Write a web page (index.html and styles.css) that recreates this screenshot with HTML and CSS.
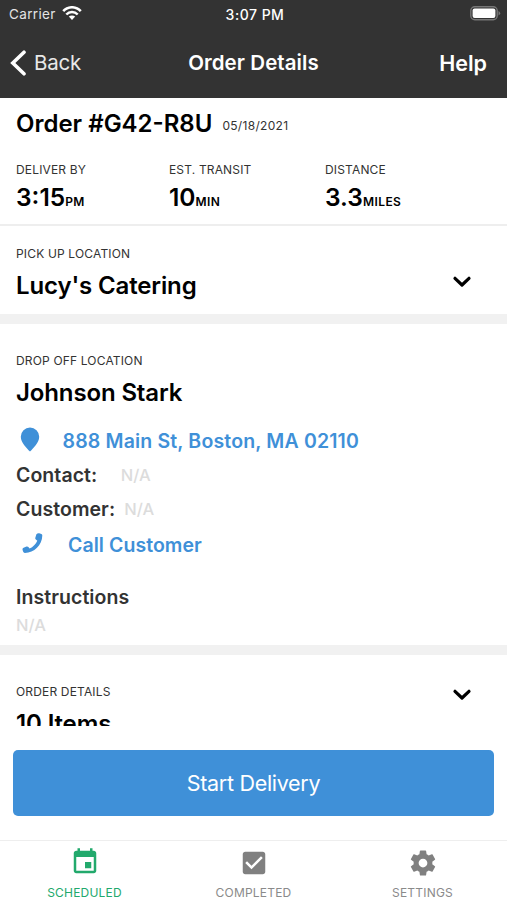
FILE: index.html
```html
<!DOCTYPE html>
<html lang="en">
<head>
<meta charset="utf-8">
<title>Order Details</title>
<link rel="stylesheet" href="styles.css">
</head>
<body>
<div class="app">
  <header class="header">
    <div class="status">
      <div class="carrier"><span>Carrier</span>
        <svg class="wifi" width="20" height="15" viewBox="0 0 20 15" fill="none" stroke="#fff" stroke-width="2.5"><path d="M1.2 5.2C6-.1 14-.1 18.8 5.2"/><path d="M4.3 8.5C7.6 5 12.4 5 15.7 8.5"/><path d="M10 14 6.8 10.6C8.5 9.1 11.5 9.1 13.2 10.6Z" fill="#fff" stroke="none"/></svg>
      </div>
      <span class="clock">3:07 PM</span>
      <svg class="battery" width="31" height="15" viewBox="0 0 31 15"><rect x=".8" y=".8" width="26.4" height="13" rx="4" fill="none" stroke="#777" stroke-width="1.4"/><rect x="2.6" y="2.6" width="22.8" height="9.4" rx="2" fill="#fff"/><path d="M28.5 5v4.6q1.7-.8 1.7-2.3T28.5 5Z" fill="#777"/></svg>
    </div>
    <nav class="nav">
      <div class="back"><svg width="16" height="26" viewBox="0 0 16 26" fill="none" stroke="#fff" stroke-width="3.6" stroke-linecap="round"><path d="M14 2.2 2.8 13 14 23.8"/></svg><span>Back</span></div>
      <h1 class="title">Order Details</h1>
      <span class="help">Help</span>
    </nav>
  </header>
  <main class="content">
    <section class="summary">
      <div class="heading"><h2 class="order">Order #G42-R8U</h2><span class="date">05/18/2021</span></div>
      <div class="stats">
        <div><div class="label">DELIVER BY</div><div class="value">3:15<small>PM</small></div></div>
        <div><div class="label">EST. TRANSIT</div><div class="value">10<small>MIN</small></div></div>
        <div><div class="label">DISTANCE</div><div class="value">3.3<small>MILES</small></div></div>
      </div>
    </section>
    <section class="pickup">
      <div><div class="label">PICK UP LOCATION</div><h2 class="name">Lucy's Catering</h2></div>
      <svg class="chevron" width="20" height="14" viewBox="0 0 20 14"><path d="M3 3.3 10 10 17 3.3"/></svg>
    </section>
    <section class="dropoff">
      <div class="label">DROP OFF LOCATION</div>
      <h2 class="name">Johnson Stark</h2>
      <div class="address"><svg width="20" height="25" viewBox="0 0 20 25"><path d="M10 .5A9.2 9.2 0 0 0 .8 9.7C.8 15.4 6.5 21 10 24.5 13.5 21 19.2 15.4 19.2 9.7A9.2 9.2 0 0 0 10 .5Z" fill="#3f90d8"/></svg><span>888 Main St, Boston, MA 02110</span></div>
      <div class="field contact"><span>Contact:</span><span class="na">N/A</span></div>
      <div class="field customer"><span>Customer:</span><span class="na">N/A</span></div>
      <div class="call"><svg width="21" height="21" viewBox="0 0 21 21"><path d="M14.4 1.3Q15.6-.1 17.3.3L19.3.9Q20.300 1.200 20.300 2.400C20.200 11.800 12 19.800 3 19.900Q1.600 20 1.200 18.800L.6 16.900Q.2 15.400 1.600 14.800L4.500 13.600Q5.600 13.200 6.400 14.100L7.600 15.500C11 13.900 13.800 11.200 15.300 7.700L13.900 6.500Q12.900 5.700 13.400 4.500Z" fill="#3f90d8"/></svg><span>Call Customer</span></div>
      <div class="field instructions">Instructions</div>
      <div class="na note">N/A</div>
    </section>
    <section class="details">
      <div><div class="label">ORDER DETAILS</div><h2 class="name">10 Items</h2></div>
      <svg class="chevron" width="20" height="14" viewBox="0 0 20 14"><path d="M3 3.3 10 10 17 3.3"/></svg>
    </section>
  </main>
  <div class="action"><button class="start">Start Delivery</button></div>
  <footer class="tabs">
    <div class="tab active"><svg width="30" height="30" viewBox="0 0 24 24"><path d="M17 12h-5v5h5v-5zM16 1v2H8V1H6v2H5c-1.11 0-1.99.9-1.99 2L3 19c0 1.1.89 2 2 2h14c1.1 0 2-.9 2-2V5c0-1.1-.9-2-2-2h-1V1h-2zm3 18H5V8h14v11z"/></svg><span>SCHEDULED</span></div>
    <div class="tab"><svg width="30" height="30" viewBox="0 0 24 24"><path d="M19 3H5c-1.11 0-2 .9-2 2v14c0 1.1.89 2 2 2h14c1.11 0 2-.9 2-2V5c0-1.1-.89-2-2-2zm-9 14l-5-5 1.41-1.41L10 14.17l7.59-7.59L19 8l-9 9z"/></svg><span>COMPLETED</span></div>
    <div class="tab"><svg width="30" height="30" viewBox="0 0 24 24"><path d="M19.43 12.98c.04-.32.07-.64.07-.98s-.03-.66-.07-.98l2.11-1.65c.19-.15.24-.42.12-.64l-2-3.46c-.12-.22-.39-.3-.61-.22l-2.49 1c-.52-.4-1.08-.73-1.69-.98l-.38-2.65C14.46 2.18 14.25 2 14 2h-4c-.25 0-.46.18-.49.42l-.38 2.65c-.61.25-1.17.59-1.69.98l-2.49-1c-.23-.09-.49 0-.61.22l-2 3.46c-.13.22-.07.49.12.64l2.11 1.65c-.04.32-.07.65-.07.98s.03.66.07.98l-2.11 1.65c-.19.15-.24.42-.12.64l2 3.46c.12.22.39.3.61.22l2.49-1c.52.4 1.08.73 1.69.98l.38 2.65c.03.24.24.42.49.42h4c.25 0 .46-.18.49-.42l.38-2.65c.61-.25 1.17-.59 1.69-.98l2.49 1c.23.09.49 0 .61-.22l2-3.46c.12-.22.07-.49-.12-.64l-2.11-1.65zM12 15.5c-1.93 0-3.5-1.57-3.5-3.5s1.57-3.5 3.5-3.5 3.5 1.57 3.5 3.5-1.57 3.5-3.5 3.5z"/></svg><span>SETTINGS</span></div>
  </footer>
</div>
</body>
</html>
```
FILE: styles.css
```css
* { box-sizing: border-box; }
body { margin: 0; font-family: Inter, "Liberation Sans", sans-serif; color: #000; background: #fff; }
h1, h2 { margin: 0; font-weight: 600; white-space: nowrap; }
svg { display: block; flex: none; }
.app { width: 507px; height: 900px; display: flex; flex-direction: column; overflow: hidden; }

.header { height: 98px; background: #333; color: #fff; flex: none; }
.status { height: 28px; display: grid; grid-template-columns: 1fr auto 1fr; align-items: center; padding: 0 6px 0 9px; font-size: 13.5px; }
.carrier { display: flex; align-items: center; gap: 6px; color: #e4e4e4; letter-spacing: .35px; }
.wifi { margin-top: -2px; }
.clock { font-weight: 500; font-size: 14px; letter-spacing: .5px; }
.battery { justify-self: end; margin-top: -1px; }
.nav { height: 69px; display: grid; grid-template-columns: 1fr auto 1fr; align-items: center; padding: 0 20px; font-size: 20.5px; }
.back { display: flex; align-items: center; gap: 8px; margin-left: -10px; color: #e8e8e8; letter-spacing: -.2px; }
.title { font-size: 20.5px; letter-spacing: .08px; }
.help { justify-self: end; font-weight: 600; font-size: 21.5px; }

.content { height: 628px; overflow: hidden; flex: none; }
.label { font-size: 12px; line-height: 16px; letter-spacing: .16px; color: #333; white-space: nowrap; }
.summary { height: 128px; padding: 10px 16px 0; border-bottom: 2px solid #eee; }
.heading { display: flex; align-items: center; gap: 10px; }
.order { font-size: 24px; line-height: 32px; }
.date { font-size: 12px; line-height: 16px; padding-top: 0; margin-top: 4px; letter-spacing: .3px; color: #333; }
.stats { display: grid; grid-template-columns: 153px 156px 1fr; padding-top: 20px; }
.stats .label { padding-top: 2px; }
.value { font-size: 24.5px; line-height: 32px; font-weight: 600; margin-top: 3px; white-space: nowrap; }
.value small { font-size: 12px; letter-spacing: .45px; }
.name { font-size: 24px; line-height: 32px; letter-spacing: -.13px; }
.pickup { height: 98px; padding: 19px 35px 0 16px; border-bottom: 10px solid #f1f1f1; display: flex; justify-content: space-between; }
.pickup .label, .details .label { position: relative; top: .5px; }
.pickup .name { margin-top: 8.5px; }
.chevron { margin-top: 30px; fill: none; stroke: #000; stroke-width: 3.2; stroke-linecap: round; stroke-linejoin: round; }
.dropoff { height: 331px; padding: 29px 16px 0; border-bottom: 10px solid #f1f1f1; }
.dropoff .name { margin-top: 8px; }
.address, .call { display: flex; align-items: center; font-size: 19.5px; font-weight: 600; color: #3f90d8; height: 34px; white-space: nowrap; }
.address { padding-left: 4px; gap: 22.5px; margin-top: 15px; letter-spacing: .16px; }
.address svg { margin-top: -4px; }
.field { font-size: 19.5px; line-height: 33.5px; font-weight: 600; color: #333; display: flex; letter-spacing: .06px; }
.na { font-size: 16.5px; font-weight: 500; color: #dcdcdc; }
.contact { padding-top: 1px; }
.contact .na { margin-left: 23.5px; }
.customer .na { margin-left: 9px; }
.call { padding-left: 6px; gap: 25px; margin-top: 2px; letter-spacing: .06px; }
.call svg { margin-top: -4px; }
.instructions { margin-top: 19px; }
.note { line-height: 20px; }
.details { padding: 28px 35px 0 16px; display: flex; justify-content: space-between; }
.details .name { margin-top: 8.5px; }
.details .chevron { margin-top: 5px; }

.action { height: 114px; padding: 24px 13px 0; flex: none; }
.start { display: block; width: 481px; height: 66px; border: 0; border-radius: 5px; background: #3f90d8; color: #fff; font: 400 21.5px Inter, sans-serif; letter-spacing: -.3px; }
.tabs { height: 60px; flex: none; border-top: 1px solid #eee; display: grid; grid-template-columns: 169px 169px 169px; }
.tab { display: flex; flex-direction: column; align-items: center; padding-top: 7px; font-size: 12px; line-height: 16px; letter-spacing: .2px; gap: 7px; color: #8a8a8a; }
.tab svg { fill: #808080; }
.tab.active { color: #22a96c; }
.tab.active svg { fill: #22a96c; margin-top: -1px; margin-bottom: 1px; }
```
